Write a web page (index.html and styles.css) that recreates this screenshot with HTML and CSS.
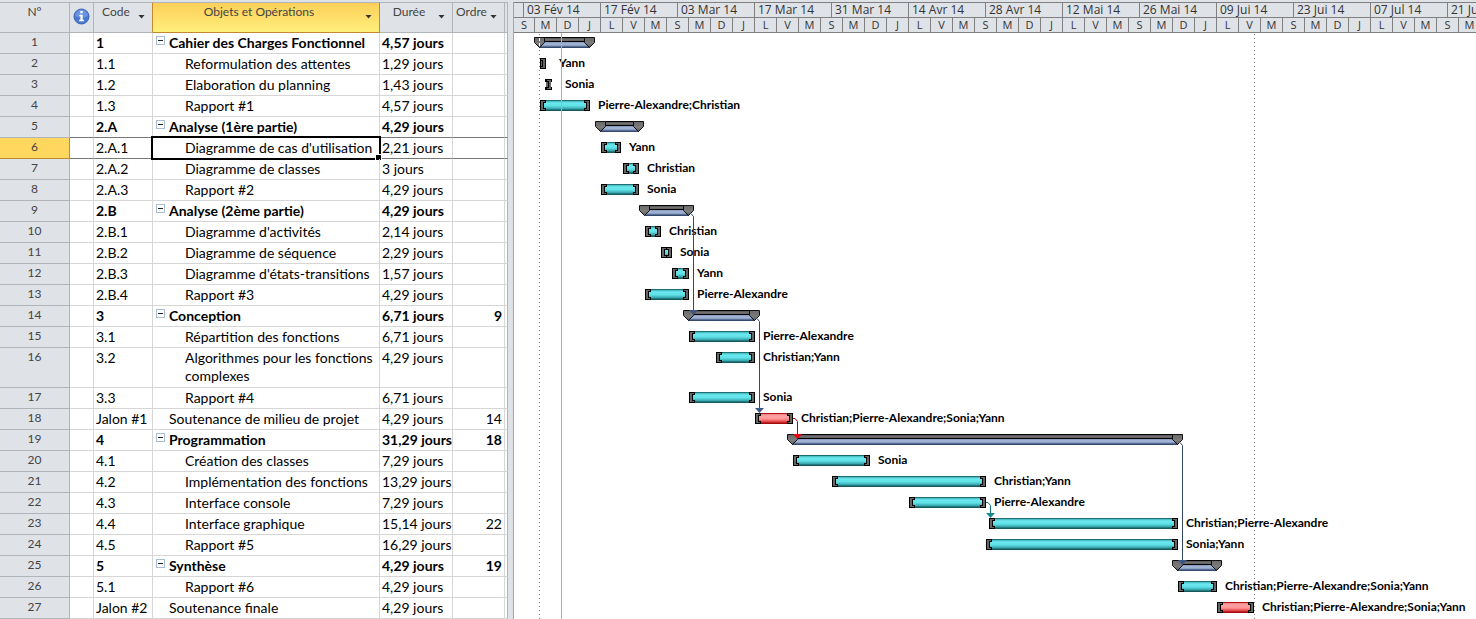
FILE: index.html
```
<!DOCTYPE html>
<html lang="fr">
<head>
	<meta charset="UTF-8">
	<title>Planning du projet</title>
	<link rel="stylesheet" href="styles.css">
</head>
<body>
	<!-- extrémité des barres récapitulatives -->
	<svg class="defs" aria-hidden="true">
		<defs>
			<linearGradient id="cap-fill" x1="0" y1="0" x2="0" y2="1">
				<stop offset="0" stop-color="#6a6a6a"/>
				<stop offset="0.6" stop-color="#7c7c7c"/>
				<stop offset="1" stop-color="#555"/>
			</linearGradient>
			<symbol id="cap" viewBox="0 0 11 11">
				<path d="M.5.5h10v5l-5 5-5-5z" fill="url(#cap-fill)" stroke="#111"/>
			</symbol>
		</defs>
	</svg>

	<div class="project">
		<table class="tasks">
			<colgroup>
				<col class="c-num"><col class="c-info"><col class="c-code"><col class="c-name"><col class="c-time"><col class="c-order"><col class="c-end">
			</colgroup>
			<thead>
				<tr>
					<th class="num">N°</th>
					<th class="info">
						<svg width="17" height="17" viewBox="0 0 17 17" aria-label="Indicateurs">
							<circle cx="8.500" cy="8.500" r="7.500" fill="#4a78d0" stroke="#3a62b4"/>
							<path d="M2 8a6.500 6.500 0 0 1 13 0q-6.500 3-13 0z" fill="#6b94e0"/>
							<path d="M7.300 3h2.400v2.300h-2.400zM6.300 6.800h3.400v5h1.200v1.400h-4.800v-1.400h1.300v-3.600h-1.100z" fill="#fff"/>
						</svg>
					</th>
					<th class="before-active"><div class="head"><span>Code</span><button type="button" aria-label="Filtrer Code"></button></div></th>
					<th class="active"><div class="head"><span>Objets et Opérations</span><button type="button" aria-label="Filtrer Objets et Opérations"></button></div></th>
					<th><div class="head"><span>Durée</span><button type="button" aria-label="Filtrer Durée"></button></div></th>
					<th><div class="head"><span>Ordre</span><button type="button" aria-label="Filtrer Ordre"></button></div></th>
					<th></th>
				</tr>
			</thead>
			<tbody>
				<tr class="group"><th>1</th><td></td><td>1</td><td class="name"><button type="button" class="toggle" aria-label="Réduire"></button>Cahier des Charges Fonctionnel</td><td>4,57 jours</td><td class="order"></td><td></td></tr>
				<tr><th>2</th><td></td><td>1.1</td><td class="name sub">Reformulation des attentes</td><td>1,29 jours</td><td class="order"></td><td></td></tr>
				<tr><th>3</th><td></td><td>1.2</td><td class="name sub">Elaboration du planning</td><td>1,43 jours</td><td class="order"></td><td></td></tr>
				<tr><th>4</th><td></td><td>1.3</td><td class="name sub">Rapport #1</td><td>4,57 jours</td><td class="order"></td><td></td></tr>
				<tr class="group before"><th>5</th><td></td><td>2.A</td><td class="name"><button type="button" class="toggle" aria-label="Réduire"></button>Analyse (1ère partie)</td><td>4,29 jours</td><td class="order"></td><td></td></tr>
				<tr class="selected"><th>6</th><td></td><td>2.A.1</td><td class="name sub current">Diagramme de cas d'utilisation</td><td>2,21 jours</td><td class="order"></td><td></td></tr>
				<tr><th>7</th><td></td><td>2.A.2</td><td class="name sub">Diagramme de classes</td><td>3 jours</td><td class="order"></td><td></td></tr>
				<tr><th>8</th><td></td><td>2.A.3</td><td class="name sub">Rapport #2</td><td>4,29 jours</td><td class="order"></td><td></td></tr>
				<tr class="group"><th>9</th><td></td><td>2.B</td><td class="name"><button type="button" class="toggle" aria-label="Réduire"></button>Analyse (2ème partie)</td><td>4,29 jours</td><td class="order"></td><td></td></tr>
				<tr><th>10</th><td></td><td>2.B.1</td><td class="name sub">Diagramme d'activités</td><td>2,14 jours</td><td class="order"></td><td></td></tr>
				<tr><th>11</th><td></td><td>2.B.2</td><td class="name sub">Diagramme de séquence</td><td>2,29 jours</td><td class="order"></td><td></td></tr>
				<tr><th>12</th><td></td><td>2.B.3</td><td class="name sub">Diagramme d'états-transitions</td><td>1,57 jours</td><td class="order"></td><td></td></tr>
				<tr><th>13</th><td></td><td>2.B.4</td><td class="name sub">Rapport #3</td><td>4,29 jours</td><td class="order"></td><td></td></tr>
				<tr class="group"><th>14</th><td></td><td>3</td><td class="name"><button type="button" class="toggle" aria-label="Réduire"></button>Conception</td><td>6,71 jours</td><td class="order">9</td><td></td></tr>
				<tr><th>15</th><td></td><td>3.1</td><td class="name sub">Répartition des fonctions</td><td>6,71 jours</td><td class="order"></td><td></td></tr>
				<tr class="tall"><th>16</th><td></td><td>3.2</td><td class="name sub">Algorithmes pour les fonctions complexes</td><td>4,29 jours</td><td class="order"></td><td></td></tr>
				<tr><th>17</th><td></td><td>3.3</td><td class="name sub">Rapport #4</td><td>6,71 jours</td><td class="order"></td><td></td></tr>
				<tr><th>18</th><td></td><td>Jalon #1</td><td class="name">Soutenance de milieu de projet</td><td>4,29 jours</td><td class="order">14</td><td></td></tr>
				<tr class="group"><th>19</th><td></td><td>4</td><td class="name"><button type="button" class="toggle" aria-label="Réduire"></button>Programmation</td><td>31,29 jours</td><td class="order">18</td><td></td></tr>
				<tr><th>20</th><td></td><td>4.1</td><td class="name sub">Création des classes</td><td>7,29 jours</td><td class="order"></td><td></td></tr>
				<tr><th>21</th><td></td><td>4.2</td><td class="name sub">Implémentation des fonctions</td><td>13,29 jours</td><td class="order"></td><td></td></tr>
				<tr><th>22</th><td></td><td>4.3</td><td class="name sub">Interface console</td><td>7,29 jours</td><td class="order"></td><td></td></tr>
				<tr><th>23</th><td></td><td>4.4</td><td class="name sub">Interface graphique</td><td>15,14 jours</td><td class="order">22</td><td></td></tr>
				<tr><th>24</th><td></td><td>4.5</td><td class="name sub">Rapport #5</td><td>16,29 jours</td><td class="order"></td><td></td></tr>
				<tr class="group"><th>25</th><td></td><td>5</td><td class="name"><button type="button" class="toggle" aria-label="Réduire"></button>Synthèse</td><td>4,29 jours</td><td class="order">19</td><td></td></tr>
				<tr><th>26</th><td></td><td>5.1</td><td class="name sub">Rapport #6</td><td>4,29 jours</td><td class="order"></td><td></td></tr>
				<tr><th>27</th><td></td><td>Jalon #2</td><td class="name">Soutenance finale</td><td>4,29 jours</td><td class="order"></td><td></td></tr>
			</tbody>
		</table>

		<div class="splitter"></div>

		<div class="gantt">
			<div class="scale">
				<div class="weeks">
					<span class="first"></span><span>03 Fév 14</span><span>17 Fév 14</span><span>03 Mar 14</span><span>17 Mar 14</span><span>31 Mar 14</span><span>14 Avr 14</span><span>28 Avr 14</span><span>12 Mai 14</span><span>26 Mai 14</span><span>09 Jui 14</span><span>23 Jui 14</span><span>07 Jul 14</span><span>21 Ju</span>
				</div>
				<div class="days">
					<span class="first">S</span><span>M</span><span>D</span><span>J</span><span>L</span><span>V</span><span>M</span><span>S</span><span>M</span><span>D</span><span>J</span><span>L</span><span>V</span><span>M</span><span>S</span><span>M</span><span>D</span><span>J</span><span>L</span><span>V</span><span>M</span><span>S</span><span>M</span><span>D</span><span>J</span><span>L</span><span>V</span><span>M</span><span>S</span><span>M</span><span>D</span><span>J</span><span>L</span><span>V</span><span>M</span><span>S</span><span>M</span><span>D</span><span>J</span><span>L</span><span>V</span><span>M</span><span>S</span><span>M</span>
				</div>
			</div>

			<div class="chart">
				<div class="row" style="--start:20px;--len:61px"><div class="summary"><svg><use href="#cap"/></svg><svg><use href="#cap"/></svg></div></div>
				<div class="row short" style="--start:26px;--len:6px"><div class="bar"></div>Yann</div>
				<div class="row short" style="--start:31px;--len:7px"><div class="bar thin"></div>Sonia</div>
				<div class="row" style="--start:26px;--len:50px"><div class="bar"></div>Pierre-Alexandre;Christian</div>
				<div class="row" style="--start:81px;--len:49px"><div class="summary"><svg><use href="#cap"/></svg><svg><use href="#cap"/></svg></div></div>
				<div class="row" style="--start:87px;--len:20px"><div class="bar"></div>Yann</div>
				<div class="row" style="--start:109px;--len:16px"><div class="bar"></div>Christian</div>
				<div class="row" style="--start:87px;--len:38px"><div class="bar"></div>Sonia</div>
				<div class="row" style="--start:125px;--len:55px"><div class="summary"><svg><use href="#cap"/></svg><svg><use href="#cap"/></svg></div></div>
				<div class="row" style="--start:131px;--len:16px"><div class="bar"></div>Christian</div>
				<div class="row" style="--start:147px;--len:11px"><div class="bar"></div>Sonia</div>
				<div class="row" style="--start:158px;--len:17px"><div class="bar"></div>Yann</div>
				<div class="row" style="--start:131px;--len:44px"><div class="bar"></div>Pierre-Alexandre</div>
				<div class="row" style="--start:169px;--len:77px"><div class="summary"><svg><use href="#cap"/></svg><svg><use href="#cap"/></svg></div></div>
				<div class="row" style="--start:175px;--len:66px"><div class="bar"></div>Pierre-Alexandre</div>
				<div class="row tall" style="--start:202px;--len:39px"><div class="bar"></div>Christian;Yann</div>
				<div class="row" style="--start:175px;--len:66px"><div class="bar"></div>Sonia</div>
				<div class="row" style="--start:241px;--len:38px"><div class="bar milestone"></div>Christian;Pierre-Alexandre;Sonia;Yann</div>
				<div class="row" style="--start:273px;--len:396px"><div class="summary"><svg><use href="#cap"/></svg><svg><use href="#cap"/></svg></div></div>
				<div class="row" style="--start:279px;--len:77px"><div class="bar"></div>Sonia</div>
				<div class="row" style="--start:318px;--len:154px"><div class="bar"></div>Christian;Yann</div>
				<div class="row" style="--start:395px;--len:77px"><div class="bar"></div>Pierre-Alexandre</div>
				<div class="row" style="--start:475px;--len:189px"><div class="bar"></div>Christian;Pierre-Alexandre</div>
				<div class="row" style="--start:472px;--len:192px"><div class="bar"></div>Sonia;Yann</div>
				<div class="row" style="--start:658px;--len:50px"><div class="summary"><svg><use href="#cap"/></svg><svg><use href="#cap"/></svg></div></div>
				<div class="row" style="--start:664px;--len:39px"><div class="bar"></div>Christian;Pierre-Alexandre;Sonia;Yann</div>
				<div class="row" style="--start:703px;--len:37px"><div class="bar milestone"></div>Christian;Pierre-Alexandre;Sonia;Yann</div>
				<div class="today"></div>

				<!-- début / fin du projet et liens entre tâches -->
				<svg class="links">
					<path class="limit" d="M25.500 1V586M740.500 1V586"/>
					<path class="limit light" d="M25.500 5V14"/>
					<g class="blue">
						<path d="M176 180.500h1l2.500 3V278"/><path class="tip" d="M175 277h9l-4.500 5z"/>
						<path d="M242 285.500h1l2.500 3V376"/><path class="tip" d="M241 375h9l-4.500 5z"/>
						<path d="M665 409.500h1l2.500 3V528"/><path class="tip" d="M664 527h9l-4.500 5z"/>
					</g>
					<g class="red"><path d="M279 385.500h2l2.500 3V402"/><path class="tip" d="M279 401h9l-4.500 5z"/></g>
					<g class="teal"><path d="M472 469.500h2l2.500 3V481"/><path class="tip" d="M472 480h9l-4.500 5z"/></g>
				</svg>
			</div>
		</div>
	</div>
</body>
</html>
```
FILE: styles.css
```
*{margin:0;padding:0;box-sizing:border-box}
body{
	background:#fff;
	font-family:Lato, "Liberation Sans", sans-serif;
	font-size:14px;
	color:#000;
}
.defs{
	position:absolute;
	width:0;
	height:0;
}
.project{
	display:flex;
	border-top:2px solid #dfe3e8;
	overflow:hidden;
}

/* tableau des tâches */
.tasks{
	flex:none;
	width:508px;
	table-layout:fixed;
	border-collapse:separate;
	border-spacing:0;
	line-height:18px;
}
.c-num{width:70px}
.c-info{width:24px}
.c-code{width:59px}
.c-name{width:227px}
.c-time{width:73px}
.c-order{width:52px}
.c-end{width:3px}
.tasks th{
	background:#dfe3e8;
	border-right:1px solid #b1b5ba;
	border-bottom:1px solid #b1b5ba;
	color:#444;
	font-weight:normal;
	font-size:12px;
	text-align:center;
	vertical-align:top;
}
.tasks thead th{
	height:31px;
	border-top:1px solid #b1b5ba;
}
.tasks thead .before-active{
	border-right-color:#c18a2c;
}
.tasks thead .active{
	background:linear-gradient(#fccf59, #fff07c);
	border-right-color:#c18a2c;
	border-bottom-color:#c18a2c;
}
.tasks .info{
	padding-top:5px;
}
.info svg{
	display:block;
	margin:0 auto;
}
.head{
	display:flex;
}
.head span{
	flex:1;
}
.head button{
	width:14px;
	height:18px;
	padding-top:9px;
	border:0;
	background:none;
}
.head button::before{
	content:"";
	display:block;
	width:7px;
	height:4px;
	background:#333;
	clip-path:polygon(0 0, 100% 0, 50% 100%);
}
.tasks tbody tr{
	height:21px;
}
.tasks tbody .tall{
	height:40px;
}
.tasks td{
	padding:1px 2px 0;
	border-right:1px solid #d6d6d6;
	border-bottom:1px solid #d6d6d6;
	vertical-align:top;
	white-space:nowrap;
}
.tasks td:last-child{
	padding:0;
	border-right-color:#b1b5ba;
}
.tasks .name{
	position:relative;
	padding-left:16px;
}
.tasks .sub{
	padding-left:32px;
}
.tall .name{
	white-space:normal;
}
.tasks .order{
	text-align:right;
}
.group td{
	font-weight:bold;
}
.toggle{
	position:absolute;
	left:3px;
	top:3px;
	width:9px;
	height:9px;
	border:1px solid #a9bed6;
	background:linear-gradient(#222, #222) center / 5px 1px no-repeat #fff;
}
.tasks .before td, .tasks .selected td{
	border-bottom-color:#777;
}
.tasks .selected th{
	background:#ffd75e;
	border-color:#c18a2c;
}
.current::before{
	content:"";
	position:absolute;
	inset:-2px;
	border:2px solid #000;
}
.current::after{
	content:"";
	position:absolute;
	right:-3px;
	bottom:-3px;
	width:5px;
	height:5px;
	border:1px solid #fff;
	background:#000;
}
.splitter{
	flex:none;
	width:6px;
	background:#dfe3e8;
	border-right:1px solid #a0a5ad;
}

/* échelle de temps */
.gantt{
	flex:1;
	min-width:0;
	overflow:hidden;
}
.scale{
	height:31px;
	background:#dfe3e8;
	border-top:1px solid #808080;
	color:#333;
	font-family:"Open Sans", "Liberation Sans", sans-serif;
	font-size:11px;
	line-height:14px;
}
.weeks, .days{
	display:flex;
	height:15px;
	border-bottom:1px solid #808080;
}
.weeks span, .days span{
	flex:none;
	border-right:1px solid #808080;
}
.weeks span{
	width:77px;
	padding-left:3px;
	font-size:12px;
}
.weeks span:last-child{
	width:auto;
	border-right:0;
}
.weeks .first{
	width:10px;
}
.days span{
	width:22px;
	text-align:center;
}
.days .first{
	width:21px;
}

/* diagramme */
.chart{
	position:relative;
}
.row{
	position:relative;
	display:flex;
	gap:8px;
	height:21px;
	padding-left:var(--start);
	font-size:12px;
	font-weight:bold;
	line-height:18px;
	white-space:nowrap;
}
.row.short{
	gap:13px;
}
.row.tall{
	height:40px;
}
.bar, .summary{
	position:relative;
	flex:none;
	width:var(--len);
	height:11px;
	margin-top:4px;
}
.bar{
	background:linear-gradient(#1d6f74 1px, #3fb5bb 1px, #6be9ef 3px, #5fe0e6 6px, #2f9ea4 9px, #17595d 10px);
}
.bar.milestone{
	background:linear-gradient(#b01015 1px, #f08080 1px, #ffa3a3 3px, #ff9494 6px, #e0383c 9px, #a00c10 10px);
}
.bar::before, .bar::after{
	content:"";
	position:absolute;
	left:0;
	top:0;
	width:6px;
	height:11px;
	background:
		linear-gradient(#666, #666) 1px 1px / 2px 9px no-repeat,
		linear-gradient(#666, #666) 1px 1px / 4px 1px no-repeat,
		linear-gradient(#666, #666) 1px 9px / 4px 1px no-repeat,
		linear-gradient(#000, #000) 0 0 / 4px 11px no-repeat,
		linear-gradient(#000, #000) 0 0 / 6px 3px no-repeat,
		linear-gradient(#000, #000) 0 8px / 6px 3px no-repeat;
}
.bar::after{
	left:auto;
	right:0;
	transform:scaleX(-1);
}
/* tâche trop courte : les deux crochets se rejoignent */
.bar.thin{
	background:linear-gradient(#000 3px, #666 3px, #666 8px, #000 8px);
	clip-path:polygon(0 0, 100% 0, 100% 3px, 6px 3px, 6px 8px, 100% 8px, 100% 100%, 0 100%, 0 8px, 1px 8px, 1px 3px, 0 3px);
}
.summary{
	display:flex;
	justify-content:space-between;
}
.summary::before{
	content:"";
	position:absolute;
	left:5px;
	right:5px;
	top:0;
	height:11px;
	background:linear-gradient(#000 1px, #555 1px, #777 3px, #555 4px, #000 4px, #000 5px, #8296bb 5px, #a9bbdc 7px, #8195bb 9px, #34486e 10px);
}
.summary svg{
	position:relative;
	width:11px;
	height:11px;
}
.today{
	position:absolute;
	left:47px;
	top:0;
	bottom:0;
	width:1px;
	background:#ea9f5f;
}
.links{
	position:absolute;
	left:0;
	top:0;
	width:100%;
	height:100%;
	fill:none;
}
.limit{
	stroke:#808080;
	stroke-dasharray:1 3;
}
.limit.light{
	stroke:#fff;
	stroke-dasharray:3 2;
}
.blue{stroke:#34486e}
.red{stroke:#c00008}
.teal{stroke:#127478}
.tip{stroke:none}
.blue .tip{fill:#3d5682}
.red .tip{fill:#e8000c}
.teal .tip{fill:#16898e}
```
